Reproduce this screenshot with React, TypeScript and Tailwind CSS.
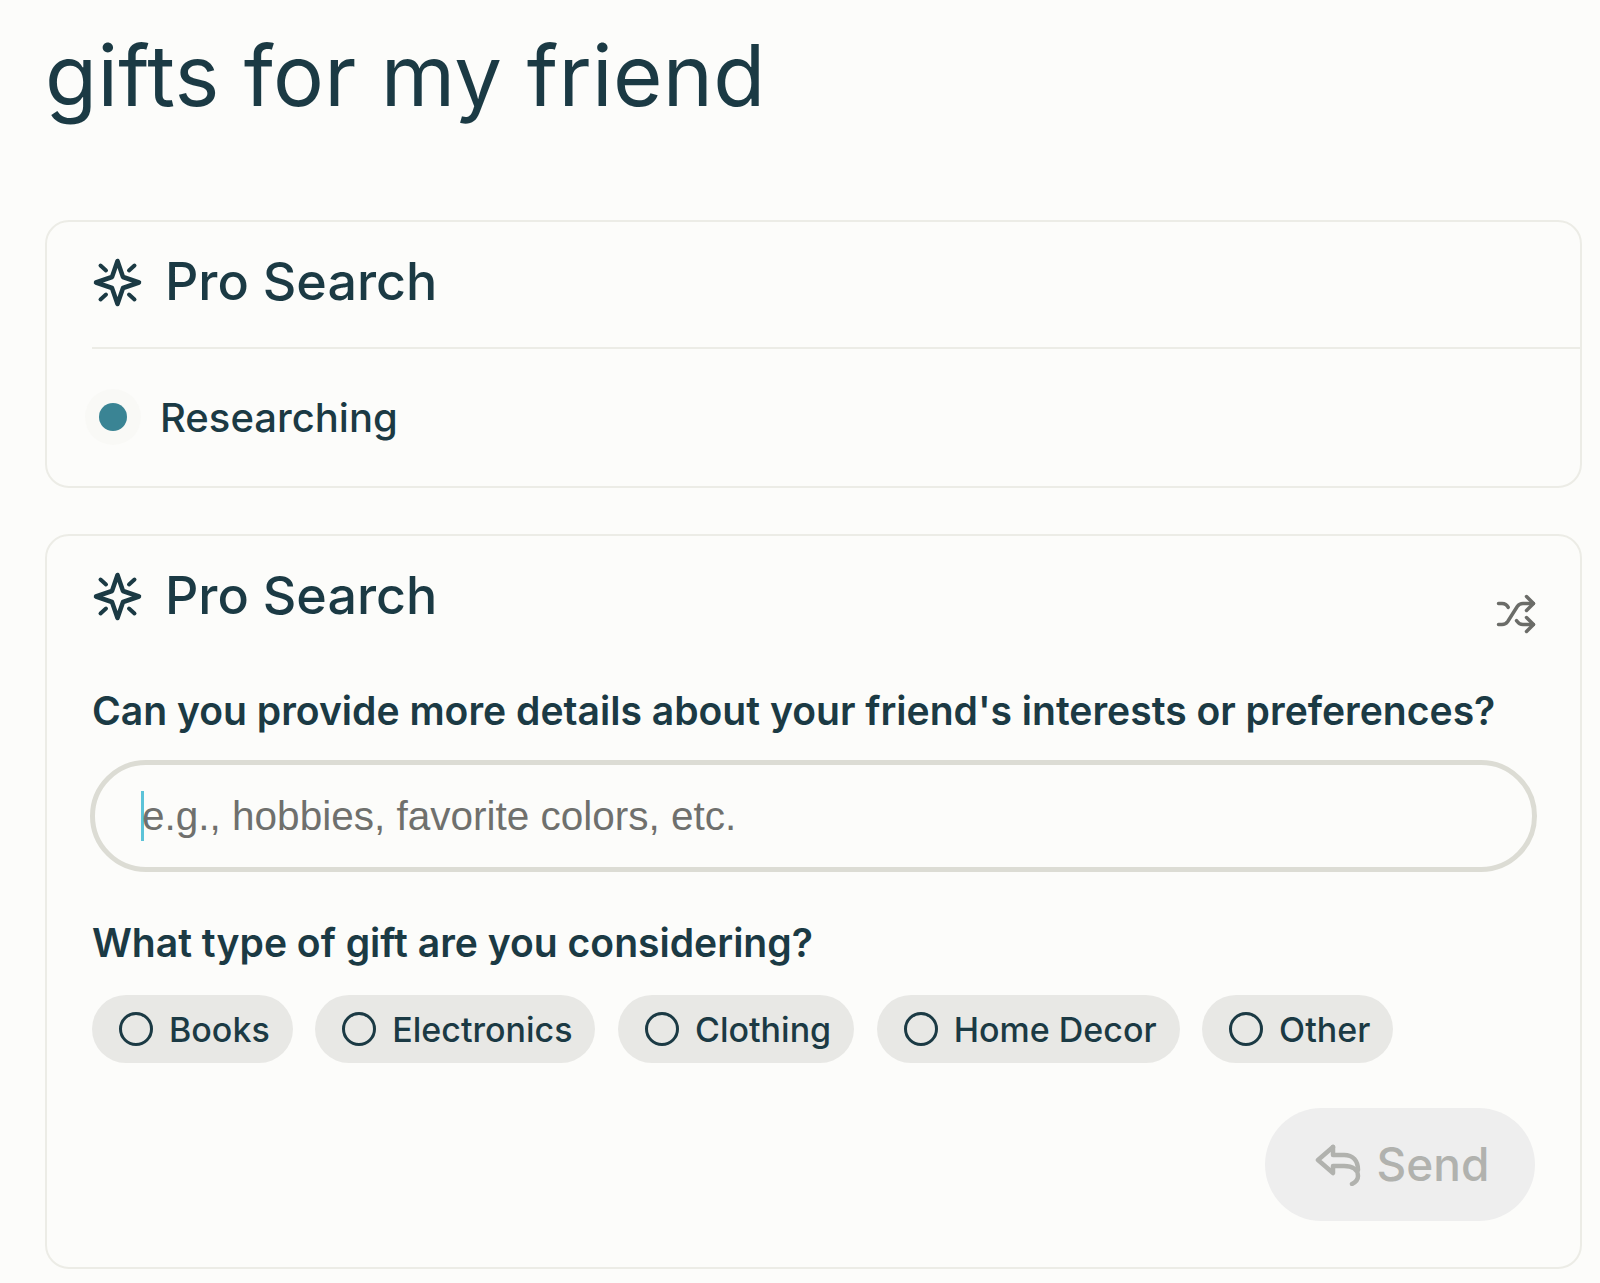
import { Shuffle } from "lucide-react";

function StarIcon() {
  return (
    <svg viewBox="0 0 51 51" className="w-[51px] h-[51px] shrink-0" fill="none" stroke="#1b3a44">
      <path
        d="M25.5 4 L31 20 L47 25.5 L31 31 L25.5 47 L20 31 L4 25.5 L20 20 Z"
        strokeWidth="4.5"
        strokeLinejoin="round"
      />
      <path d="M8.5 8.5 L14 13.5 M42.5 8.5 L37 13.5 M8.5 42.5 L14 37.5 M42.5 42.5 L37 37.5" strokeWidth="4" strokeLinecap="round" />
    </svg>
  );
}

function ReplyIcon() {
  return (
    <svg viewBox="0 0 46 42" className="w-[46px] h-[42px] shrink-0" fill="none" stroke="#b1b2ae" strokeWidth="4.5" strokeLinejoin="round" strokeLinecap="round">
      <path d="M18 3 L3 16 L18 29 V22 H29 C38 22 43 26 43 32 C43 35 41 38 37 40" />
      <path d="M18 3 V11 H29 C38 11 43 17 43 26" />
    </svg>
  );
}

function ProHeader() {
  return (
    <div className="flex items-center gap-[22px]">
      <StarIcon />
      <span className="text-[52px] leading-[60px] font-medium text-[#1b3a44]">Pro Search</span>
    </div>
  );
}

const options = ["Books", "Electronics", "Clothing", "Home Decor", "Other"];

export default function App() {
  return (
    <div className="min-h-[1283px] bg-[#fcfcfa] pl-[45px] pr-[18px] font-['Inter',sans-serif]">
      <h1 className="pt-[24px] h-[220px] text-[85px] leading-[104px] font-normal text-[#1b3a44] tracking-[0.3px]">
        gifts for my friend
      </h1>

      <section className="h-[268px] border-2 border-[#ecece6] rounded-[24px] pl-[45px] pt-[30px]">
        <ProHeader />
        <div className="mt-[35px] h-[2px] bg-[#ecece6]" />
        <div className="mt-[40px] flex items-center gap-[19px]">
          <div className="w-[56px] h-[56px] -ml-[7px] rounded-full bg-[#f9f9f6] flex items-center justify-center">
            <div className="w-[28px] h-[28px] rounded-full bg-[#3a8494]" />
          </div>
          <span className="pt-[2px] text-[40px] leading-[48px] font-medium text-[#1b3a44]">Researching</span>
        </div>
      </section>

      <section className="mt-[46px] h-[735px] border-2 border-[#ecece6] rounded-[24px] pl-[45px] pr-[43px] pt-[30px]">
        <div className="flex justify-between items-start">
          <ProHeader />
          <Shuffle className="w-[42px] h-[42px] mt-[27px] text-[#6b6c68]" strokeWidth={2} />
        </div>
        <p className="mt-[52px] text-[39.1px] leading-[48px] font-semibold text-[#1b3a44]">
          Can you provide more details about your friend's interests or preferences?
        </p>
        <div className="mt-[25px] -ml-[2px] h-[112px] border-[5px] border-[#dcdcd4] rounded-full pl-[46px] flex items-center">
          <span className="w-[3px] h-[50px] bg-[#5cc3d8] shrink-0" />
          <span className="-ml-[2px] font-['Liberation_Sans',sans-serif] text-[40.5px] text-[#6f706d] font-normal">
            e.g., hobbies, favorite colors, etc.
          </span>
        </div>
        <p className="mt-[47px] text-[39.1px] leading-[48px] font-semibold text-[#1b3a44]">
          What type of gift are you considering?
        </p>
        <div className="mt-[28px] flex gap-[22.5px]">
          {options.map((o) => (
            <div key={o} className="h-[68px] rounded-full bg-[#e8e8e5] pl-[27px] pr-[23px] flex items-center gap-[16px]">
              <span className="w-[34px] h-[34px] rounded-full border-[3px] border-[#1b3a44] shrink-0" />
              <span className="text-[34px] font-medium text-[#1b3a44]">{o}</span>
            </div>
          ))}
        </div>
        <div className="mt-[45px] flex justify-end">
          <button className="mr-[2px] w-[270px] h-[113px] pl-[4px] rounded-full bg-[#eeeeee] flex items-center justify-center gap-[16px] text-[46px] font-medium text-[#b1b2ae]">
            <ReplyIcon />
            Send
          </button>
        </div>
      </section>
    </div>
  );
}
